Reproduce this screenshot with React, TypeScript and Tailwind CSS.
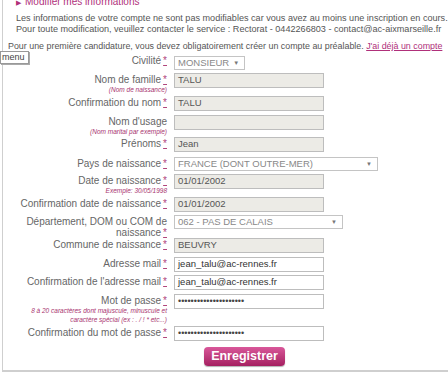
import React from "react";

const Req = () => (
  <span className="ml-[2px] text-[#b0457c] underline decoration-[#b0457c]">*</span>
);

function Row({
  h,
  label,
  req,
  sub,
  children,
}: {
  h: number;
  label: React.ReactNode;
  req?: boolean;
  sub?: React.ReactNode;
  children: React.ReactNode;
}) {
  return (
    <div className="flex items-start" style={{ height: h }}>
      <div className="w-[164px] text-right pt-[1px]">
        <div className="text-[10px] leading-[11px] text-[#666]">
          {label}
          {req && <Req />}
        </div>
        {sub && (
          <div className="text-[6.5px] leading-[9px] italic text-[#a8336f]">{sub}</div>
        )}
      </div>
      <div className="ml-[7px]">{children}</div>
    </div>
  );
}

function Input({
  value,
  w = 150,
  ro = true,
  pwd = false,
}: {
  value: string;
  w?: number;
  ro?: boolean;
  pwd?: boolean;
}) {
  return (
    <div
      className={`h-[15px] border border-[#bdbdbd] flex items-center pl-[3px] text-[9.5px] ${
        ro ? "bg-[#ecebe6] text-[#555]" : "bg-white text-[#333]"
      }`}
      style={{ width: w }}
    >
      {pwd ? (
        <span className="text-[9px] leading-[9px] text-[#444]">•••••••••••••••••••••</span>
      ) : (
        value
      )}
    </div>
  );
}

function Select({ value, w, arrowRight }: { value: string; w?: number; arrowRight?: boolean }) {
  return (
    <div
      className="h-[14px] border border-[#c4c4c4] bg-white flex items-center pl-[3px] pr-[5px] text-[9.5px] text-[#888]"
      style={w ? { width: w } : undefined}
    >
      <span>{value}</span>
      <span className={`text-[6px] text-[#777] ${arrowRight ? "ml-auto" : "ml-[4px]"}`}>▼</span>
    </div>
  );
}

export default function App() {
  return (
    <div className="relative w-[448px] h-[375px] overflow-hidden bg-white font-['Liberation_Sans',Arial,sans-serif]">
      <div className="ml-[2px] h-[372px] border-l border-b-2 border-[#cfcfcf] overflow-hidden">
        <div className="-mt-[4px] pl-[13px] text-[10px] leading-[12px] text-[#b0307a]">
          <span className="text-[7px] mr-[4px]">▶</span>Modifier mes informations
        </div>
        <div className="mt-[4px] pl-[13px] text-[9.1px] leading-[11px] text-[#555] whitespace-nowrap">
          <div>Les informations de votre compte ne sont pas modifiables car vous avez au moins une inscription en cours.</div>
          <div>Pour toute modification, veuillez contacter le service : Rectorat - 0442266803 - contact@ac-aixmarseille.fr</div>
        </div>
        <div className="mt-[6px] pl-[5px] text-[8.9px] leading-[11px] text-[#555] whitespace-nowrap">
          Pour une première candidature, vous devez obligatoirement créer un compte au préalable.{" "}
          <span className="text-[#b0307a] underline">J'ai déjà un compte</span>
        </div>

        <div className="mt-[2px]">
          <Row h={19} label="Civilité" req>
            <div className="mt-[2px]">
              <Select value="MONSIEUR" />
            </div>
          </Row>
          <Row h={23} label="Nom de famille" req sub="(Nom de naissance)">
            <Input value="TALU" />
          </Row>
          <Row h={19} label="Confirmation du nom" req>
            <Input value="TALU" />
          </Row>
          <Row h={22} label="Nom d'usage" sub="(Nom marital par exemple)">
            <Input value="" />
          </Row>
          <Row h={20} label="Prénoms" req>
            <Input value="Jean" />
          </Row>
          <Row h={17} label="Pays de naissance" req>
            <Select value="FRANCE (DONT OUTRE-MER)" w={204} arrowRight />
          </Row>
          <Row h={23} label="Date de naissance" req sub="Exemple: 30/05/1998">
            <Input value="01/01/2002" />
          </Row>
          <Row h={18} label="Confirmation date de naissance" req>
            <Input value="01/01/2002" />
          </Row>
          <Row
            h={23}
            label={
              <>
                Département, DOM ou COM de
                <br />
                naissance
              </>
            }
            req
          >
            <Select value="062 - PAS DE CALAIS" w={169} arrowRight />
          </Row>
          <Row h={19} label="Commune de naissance" req>
            <Input value="BEUVRY" />
          </Row>
          <Row h={18} label="Adresse mail" req>
            <Input value="jean_talu@ac-rennes.fr" ro={false} />
          </Row>
          <Row h={19} label="Confirmation de l'adresse mail" req>
            <Input value="jean_talu@ac-rennes.fr" ro={false} />
          </Row>
          <Row
            h={32}
            label="Mot de passe"
            req
            sub={
              <>
                8 à 20 caractères dont majuscule, minuscule et
                <br />
                caractère spécial (ex : . / ! * etc...)
              </>
            }
          >
            <Input value="" ro={false} pwd />
          </Row>
          <Row h={21} label="Confirmation du mot de passe" req>
            <Input value="" ro={false} pwd />
          </Row>
          <div className="flex justify-center pl-[38px]">
            <button className="h-[19px] px-[7px] rounded-[4px] bg-gradient-to-b from-[#d9579a] to-[#a51f61] text-white font-bold text-[12.5px] leading-[19px] shadow-[0_1px_1px_rgba(0,0,0,0.3)]">
              Enregistrer
            </button>
          </div>
        </div>
      </div>
      <div className="absolute left-0 top-[51px] w-[29px] h-[13px] bg-white border border-[#999] shadow-[1px_1px_0_#aaa] text-[9px] leading-[11px] pl-[1px] text-[#444]">
        menu
      </div>
    </div>
  );
}
